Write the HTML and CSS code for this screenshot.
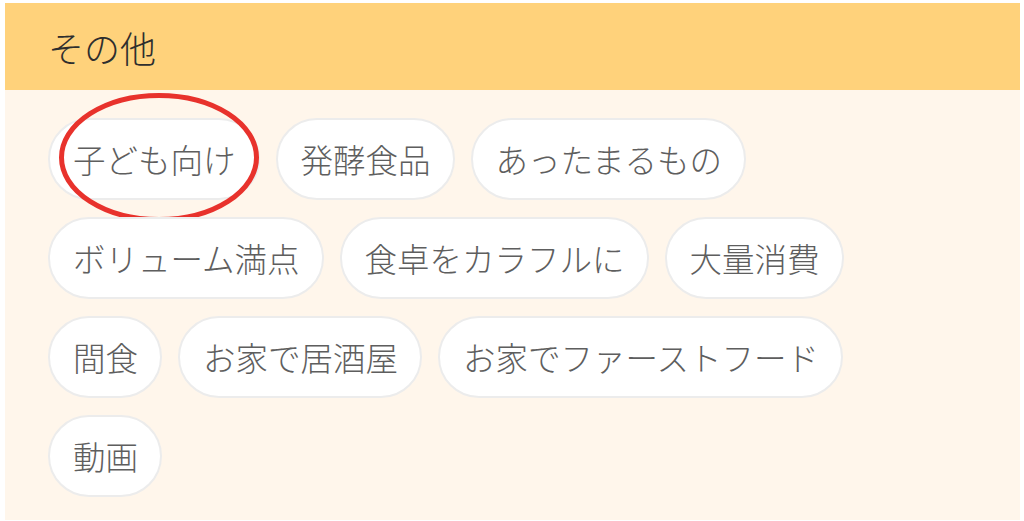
FILE: index.html
```html
<!DOCTYPE html>
<html lang="ja">
<head>
<meta charset="utf-8">
<title>その他</title>
<link rel="stylesheet" href="styles.css">
</head>
<body>
<section class="panel">
  <header class="panel-head">その他</header>
  <div class="tags">
    <span class="tag tag-marked">子ども向け
      <svg class="mark" width="206" height="135" viewBox="0 0 206 135" aria-hidden="true">
        <ellipse cx="103" cy="67.5" rx="97.5" ry="62" fill="none" stroke="#e8322c" stroke-width="5"/>
      </svg>
    </span>
    <span class="tag">発酵食品</span>
    <span class="tag">あったまるもの</span>
    <span class="tag">ボリューム満点</span>
    <span class="tag">食卓をカラフルに</span>
    <span class="tag">大量消費</span>
    <span class="tag">間食</span>
    <span class="tag">お家で居酒屋</span>
    <span class="tag">お家でファーストフード</span>
    <span class="tag">動画</span>
  </div>
</section>
</body>
</html>
```

FILE: styles.css
```css
html, body {
  margin: 0;
  padding: 0;
  background: #ffffff;
}

body {
  width: 1024px;
  height: 521px;
  overflow: hidden;
  font-family: "Noto Sans CJK JP", "Noto Sans", sans-serif;
}

.panel {
  margin: 3px 4px 0 5px;
  height: 517px;
  display: flex;
  flex-direction: column;
  background: #fff6eb;
}

.panel-head {
  height: 87px;
  flex: none;
  display: flex;
  align-items: center;
  padding-left: 43px;
  background: #ffd27b;
  color: #2e2e2e;
  font-size: 36px;
  font-weight: 300;
  line-height: 1;
}

.tags {
  display: flex;
  flex-wrap: wrap;
  align-content: flex-start;
  gap: 17px 16px;
  padding: 28px 120px 0 43px;
}

.tag {
  position: relative;
  box-sizing: border-box;
  height: 82px;
  display: flex;
  align-items: center;
  padding: 0 22px 0 23px;
  border: 2px solid #ececec;
  border-radius: 41px;
  background: #ffffff;
  color: #5e5e5e;
  font-size: 32.5px;
  font-weight: 300;
  line-height: 1;
  white-space: nowrap;
}

.mark {
  position: absolute;
  left: 6px;
  top: -30px;
  pointer-events: none;
}
```
